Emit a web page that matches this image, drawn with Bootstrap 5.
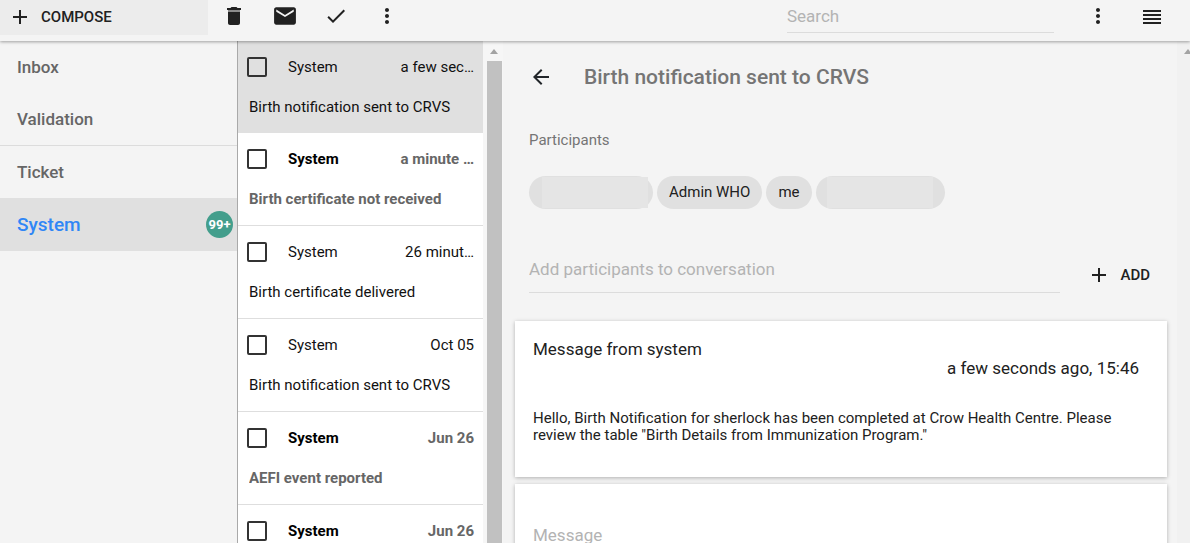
<!DOCTYPE html>
<html lang="en">
<head>
<meta charset="utf-8">
<meta name="viewport" content="width=device-width, initial-scale=1">
<title>Messaging</title>
<link href="https://cdn.jsdelivr.net/npm/bootstrap@5.3.0/dist/css/bootstrap.min.css" rel="stylesheet">
<script src="https://cdn.jsdelivr.net/npm/bootstrap@5.3.0/dist/js/bootstrap.bundle.min.js" defer></script>
<style>
  body { font-family: Roboto, "Liberation Sans", sans-serif; font-size: 15px; line-height: 20px; background: #f4f4f4; color: #212121; }
  svg { display: block; fill: currentColor; flex: none; }
  button { color: #212121; }
  .topbar { height: 41px; z-index: 2; box-shadow: 0 1px 3px rgba(0,0,0,.35); background: #f4f4f4; }
  .compose { width: 208px; height: 35px; background: #ececec; padding: 0 0 2px 8px; gap: 9px; font-weight: 500; }
  .bar-btn { width: 24px; height: 32px; color: #212121; }
  .tools { margin-left: 14px; gap: 27px; }
  .tools-end { gap: 30px; margin: 0 26px 0 32px; }
  .line-field { border: 0; border-bottom: 1px solid #dcdcdc; background: transparent; outline: 0; padding: 0; font-size: 17px; color: #212121; }
  .line-field::placeholder, .msg-field::placeholder { color: #b3b3b3; opacity: 1; }
  .search { width: 267px; height: 33px; }
  .sidebar { width: 20%; border-right: 1px solid #a9a9a9; }
  .side-link { height: 52px; padding: 0 4px 0 17px; font-size: 17px; font-weight: 500; color: #666; }
  .side-link.ruled { height: 53px; border-bottom: 1px solid #dcdcdc; }
  .side-link.current { height: 53px; background: #e0e0e0; color: #2f86f6; font-size: 19px; }
  .count { width: 27px; height: 27px; background: #439e8c; font-size: 13px; font-weight: 700; }
  .thread-pane { width: 265px; }
  .thread { height: 93px; padding: 12px 9px 0 9px; background: #fff; border-bottom: 1px solid #dedede; color: #111; }
  .thread.open { height: 92px; background: #e0e0e0; border: 0; }
  .thread .who { width: 94px; }
  .thread .when { width: 74px; }
  .thread .subject { margin: 20px 0 0 2px; }
  .thread.unread { font-weight: 700; color: #666; }
  .thread.unread .who { color: #000; }
  .tick { appearance: none; width: 20px; height: 20px; border: 2px solid #333; border-radius: 2px; margin: 0 21px 0 0; background: transparent; }
  .gutter { background: #f1f1f1; color: #a3a3a3; }
  .gutter-list { width: 20px; padding: 8px 2px 0 4px; background: #f6f6f6; }
  .gutter-page { width: 13px; padding: 8px 0 0 7px; }
  .thumb { background: #c1c1c1; margin-top: 7px; width: 15px; }
  .detail { padding: 0 10px 0 12px; min-width: 0; }
  .inset { padding: 0 14px; }
  .title-row { padding-top: 24px; gap: 31px; }
  .title-row h1 { font-size: 21px; line-height: 24px; font-weight: 500; color: #757575; }
  .label-line { margin: 41px 0 26px; color: #757575; }
  .chip { height: 33px; padding: 0 12px 2px; border-radius: 17px; background: #e0e0e0; }
  .chip.hidden-name { padding: 0 5px 0 13px; }
  .chip.hidden-name span { width: 106px; height: 31px; background: #e5e5e5; }
  .chip.hidden-name.last { padding: 0 12px 0 11px; }
  .add-row { margin-top: 37px; gap: 27px; }
  .add-row .line-field { height: 47px; }
  .add-btn { gap: 9px; font-weight: 500; padding-right: 3px; margin-top: 10px; }
  .sheet { background: #fff; box-shadow: 0 1px 4px rgba(0,0,0,.28); }
  .message { margin-top: 28px; min-height: 156px; padding: 18px 28px 0 18px; }
  .message h2 { font-size: 17px; line-height: 20px; }
  .message time { font-size: 17px; line-height: 18px; }
  .message p { margin-top: 33px; line-height: 17px; }
  .reply { margin-top: 7px; padding: 40px 18px 20px; }
  .msg-field { border: 0; outline: 0; resize: none; padding: 0; font-size: 17px; line-height: 22px; }
</style>
</head>
<body>
<div class="vh-100 d-flex flex-column overflow-hidden">
  <header class="topbar d-flex position-relative flex-shrink-0">
    <button type="button" class="compose border-0 d-flex align-items-center">
      <svg width="24" height="24" viewBox="0 0 24 24"><path d="M19 13h-6v6h-2v-6H5v-2h6V5h2v6h6z"/></svg>COMPOSE
    </button>
    <div class="tools d-flex">
      <button type="button" class="bar-btn btn p-0 border-0" aria-label="Delete"><svg width="24" height="24" viewBox="0 0 24 24"><path d="M6 19c0 1.100.9 2 2 2h8c1.100 0 2-.9 2-2V8H6z"/><path d="M6 6h12v2H6z" opacity=".5"/><path d="M19 4h-3.500l-1-1h-5l-1 1H5v2h14z"/></svg></button>
      <button type="button" class="bar-btn btn p-0 border-0" aria-label="Mark unread"><svg width="24" height="24" viewBox="1 1 22 22"><path d="M20 4H4c-1.100 0-2 .9-2 2v12c0 1.100.9 2 2 2h16c1.100 0 2-.9 2-2V6c0-1.100-.9-2-2-2zm0 4l-8 5-8-5V6l8 5 8-5v2z"/></svg></button>
      <button type="button" class="bar-btn btn p-0 border-0" aria-label="Mark read"><svg width="24" height="24" viewBox="0 0 24 24"><path d="M9 16.170L4.830 12l-1.420 1.410L9 19 21 7l-1.410-1.410z"/></svg></button>
      <button type="button" class="bar-btn btn p-0 border-0" aria-label="More"><svg width="24" height="24" viewBox="0 0 24 24"><path id="dots" d="M12 8c1.100 0 2-.9 2-2s-.9-2-2-2-2 .9-2 2 .9 2 2 2zm0 2c-1.100 0-2 .9-2 2s.9 2 2 2 2-.9 2-2-.9-2-2-2zm0 6c-1.100 0-2 .9-2 2s.9 2 2 2 2-.9 2-2-.9-2-2-2z"/></svg></button>
    </div>
    <input class="line-field search ms-auto" type="text" placeholder="Search" aria-label="Search">
    <div class="tools-end d-flex">
      <button type="button" class="bar-btn btn p-0 border-0" aria-label="Options"><svg width="24" height="24" viewBox="0 0 24 24"><use href="#dots"/></svg></button>
      <button type="button" class="bar-btn btn p-0 border-0" aria-label="View"><svg width="24" height="24" viewBox="0 -1 24 24"><path d="M3 15h18v-2H3v2zm0 4h18v-2H3v2zm0-8h18V9H3v2zm0-6v2h18V5H3z"/></svg></button>
    </div>
  </header>

  <div class="d-flex flex-grow-1 overflow-hidden">
    <nav class="sidebar flex-shrink-0">
      <a href="#" class="side-link d-flex align-items-center text-decoration-none">Inbox</a>
      <a href="#" class="side-link ruled d-flex align-items-center text-decoration-none">Validation</a>
      <a href="#" class="side-link d-flex align-items-center text-decoration-none">Ticket</a>
      <a href="#" class="side-link current d-flex align-items-center justify-content-between text-decoration-none">System
        <span class="count rounded-circle text-white d-flex align-items-center justify-content-center">99+</span></a>
    </nav>

    <section class="thread-pane d-flex flex-shrink-0 overflow-hidden" aria-label="Conversations">
      <div class="flex-grow-1">
        <article class="thread open">
          <div class="d-flex align-items-center pt-1"><input class="tick" type="checkbox" aria-label="Select"><span class="who">System</span><span class="when ms-auto text-end text-nowrap">a few sec…</span></div>
          <div class="subject text-truncate">Birth notification sent to CRVS</div>
        </article>
        <article class="thread unread">
          <div class="d-flex align-items-center pt-1"><input class="tick" type="checkbox" aria-label="Select"><span class="who">System</span><span class="when ms-auto text-end text-nowrap">a minute …</span></div>
          <div class="subject text-truncate">Birth certificate not received</div>
        </article>
        <article class="thread">
          <div class="d-flex align-items-center pt-1"><input class="tick" type="checkbox" aria-label="Select"><span class="who">System</span><span class="when ms-auto text-end text-nowrap">26 minut…</span></div>
          <div class="subject text-truncate">Birth certificate delivered</div>
        </article>
        <article class="thread">
          <div class="d-flex align-items-center pt-1"><input class="tick" type="checkbox" aria-label="Select"><span class="who">System</span><span class="when ms-auto text-end text-nowrap">Oct 05</span></div>
          <div class="subject text-truncate">Birth notification sent to CRVS</div>
        </article>
        <article class="thread unread">
          <div class="d-flex align-items-center pt-1"><input class="tick" type="checkbox" aria-label="Select"><span class="who">System</span><span class="when ms-auto text-end text-nowrap">Jun 26</span></div>
          <div class="subject text-truncate">AEFI event reported</div>
        </article>
        <article class="thread unread">
          <div class="d-flex align-items-center pt-1"><input class="tick" type="checkbox" aria-label="Select"><span class="who">System</span><span class="when ms-auto text-end text-nowrap">Jun 26</span></div>
        </article>
      </div>
      <div class="gutter gutter-list d-flex flex-column align-items-center" aria-hidden="true">
        <svg width="8" height="5" viewBox="0 0 8 5"><path d="M0 5l4-5 4 5z"/></svg>
        <div class="thumb flex-grow-1"></div>
      </div>
    </section>

    <main class="detail flex-grow-1">
      <div class="inset">
        <div class="title-row d-flex align-items-center">
          <button type="button" class="btn p-0 border-0" aria-label="Back"><svg width="24" height="24" viewBox="0 0 24 24"><path d="M20 11H7.830l5.590-5.590L12 4l-8 8 8 8 1.410-1.410L7.830 13H20z"/></svg></button>
          <h1 class="m-0">Birth notification sent to CRVS</h1>
        </div>
        <div class="label-line">Participants</div>
        <div class="d-flex gap-1">
          <span class="chip hidden-name d-flex align-items-center"><span></span></span>
          <span class="chip d-flex align-items-center">Admin WHO</span>
          <span class="chip d-flex align-items-center">me</span>
          <span class="chip hidden-name last d-flex align-items-center"><span></span></span>
        </div>
        <div class="add-row d-flex align-items-center">
          <input class="line-field flex-grow-1" type="text" placeholder="Add participants to conversation" aria-label="Add participants">
          <button type="button" class="add-btn border-0 bg-transparent py-0 ps-0 d-flex align-items-center"><svg width="24" height="24" viewBox="0 0 24 24"><path d="M19 13h-6v6h-2v-6H5v-2h6V5h2v6h6z"/></svg>ADD</button>
        </div>
      </div>
      <article class="sheet message">
        <h2 class="m-0 fw-normal">Message from system</h2>
        <time class="d-block text-end">a few seconds ago, 15:46</time>
        <p class="mb-0">Hello, Birth Notification for sherlock has been completed at Crow Health Centre. Please review the table "Birth Details from Immunization Program."</p>
      </article>
      <div class="sheet reply">
        <textarea class="msg-field d-block w-100" rows="3" placeholder="Message" aria-label="Message"></textarea>
      </div>
    </main>
    <div class="gutter gutter-page flex-shrink-0 overflow-hidden" aria-hidden="true">
      <svg width="8" height="5" viewBox="0 0 8 5"><path d="M0 5l4-5 4 5z"/></svg>
    </div>
  </div>
</div>
</body>
</html>
